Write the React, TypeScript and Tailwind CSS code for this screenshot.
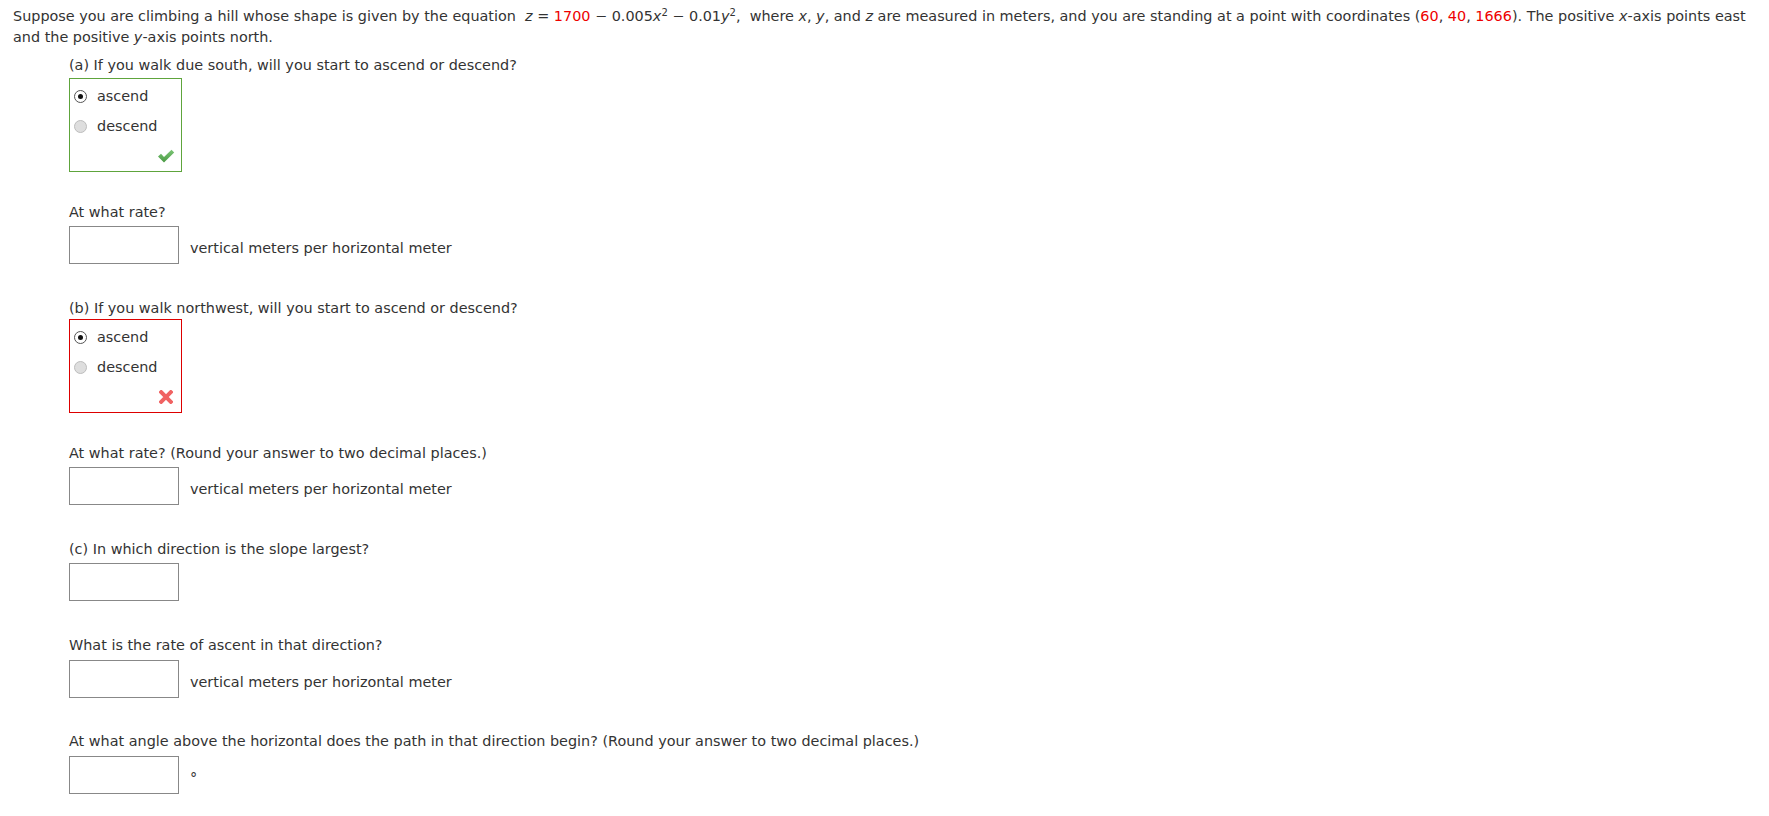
import React from "react";

const font = { fontFamily: "Verdana, 'DejaVu Sans', sans-serif" };

function Radio({ checked }: { checked?: boolean }) {
  if (checked) {
    return (
      <span className="flex h-[13px] w-[13px] items-center justify-center rounded-full border border-[#555] bg-white">
        <span className="h-[5px] w-[5px] rounded-full bg-[#111]" />
      </span>
    );
  }
  return <span className="h-[13px] w-[13px] rounded-full border border-[#bdbdbd] bg-[#dedede]" />;
}

function CheckMark() {
  return (
    <svg width="18" height="14" viewBox="0 0 18 14">
      <defs>
        <linearGradient id="ck" x1="0" y1="0" x2="0" y2="1">
          <stop offset="0" stopColor="#7cc576" />
          <stop offset="1" stopColor="#4a9a44" />
        </linearGradient>
      </defs>
      <path d="M1 7.5 L4 4.8 L7 8 L14.5 0.8 L17.2 3.6 L7 13.4 Z" fill="url(#ck)" />
    </svg>
  );
}

function CrossMark() {
  return (
    <svg width="14" height="14" viewBox="0 0 14 14">
      <path d="M2.2 2.2 L11.8 11.8 M11.8 2.2 L2.2 11.8" stroke="#f06262" strokeWidth="4" strokeLinecap="square" />
    </svg>
  );
}

function Choices({ correct }: { correct: boolean }) {
  return (
    <div
      className={`flex h-[94px] w-[113px] flex-col border ${correct ? "border-[#5ea43c]" : "border-[#dd0000]"}`}
    >
      <div className="mt-[2px] flex h-[30px] items-center gap-[10px] pl-[4px]">
        <Radio checked />
        <span>ascend</span>
      </div>
      <div className="flex h-[30px] items-center gap-[10px] pl-[4px]">
        <Radio />
        <span>descend</span>
      </div>
      <div className="flex flex-1 items-end justify-end pb-[8px] pr-[6px]">
        {correct ? <CheckMark /> : <div className="pr-[2px]"><CrossMark /></div>}
      </div>
    </div>
  );
}

function Answer({ unit }: { unit?: string }) {
  return (
    <div className="flex items-end">
      <div className="h-[38px] w-[110px] border border-[#888]" />
      {unit && <span className="mb-[5px] ml-[11px]">{unit}</span>}
    </div>
  );
}

const R = ({ children }: { children: React.ReactNode }) => <span className="text-[#ee0000]">{children}</span>;

const Sup = ({ children }: { children: React.ReactNode }) => (
  <sup className="text-[10px] leading-none">{children}</sup>
);

export default function App() {
  return (
    <main className="min-h-screen bg-white px-[13px] pt-[6px] text-[14.4px] leading-[21px] text-[#333]" style={font}>
      <p>
        Suppose you are climbing a hill whose shape is given by the equation&nbsp; <i>z</i> = <R>1700</R> − 0.005
        <i>x</i>
        <Sup>2</Sup> − 0.01<i>y</i>
        <Sup>2</Sup>,&nbsp; where <i>x</i>, <i>y</i>, and <i>z</i> are measured in meters, and you are standing at a
        point with coordinates (<R>60</R>, <R>40</R>, <R>1666</R>). The positive <i>x</i>-axis points east and the
        positive <i>y</i>-axis points north.
      </p>

      <div className="ml-[56px]">
        <p className="mt-[7px]">(a) If you walk due south, will you start to ascend or descend?</p>
        <div className="mt-[2px]">
          <Choices correct />
        </div>

        <p className="mt-[30px]">At what rate?</p>
        <div className="mt-[3px]">
          <Answer unit="vertical meters per horizontal meter" />
        </div>

        <p className="mt-[34px]">(b) If you walk northwest, will you start to ascend or descend?</p>
        <Choices correct={false} />

        <p className="mt-[30px]">At what rate? (Round your answer to two decimal places.)</p>
        <div className="mt-[3px]">
          <Answer unit="vertical meters per horizontal meter" />
        </div>

        <p className="mt-[34px]">(c) In which direction is the slope largest?</p>
        <div className="mt-[3px]">
          <Answer />
        </div>

        <p className="mt-[34px]">What is the rate of ascent in that direction?</p>
        <div className="mt-[4px]">
          <Answer unit="vertical meters per horizontal meter" />
        </div>

        <p className="mt-[33px]">
          At what angle above the horizontal does the path in that direction begin? (Round your answer to two decimal
          places.)
        </p>
        <div className="mt-[4px]">
          <Answer unit="°" />
        </div>
      </div>
    </main>
  );
}
